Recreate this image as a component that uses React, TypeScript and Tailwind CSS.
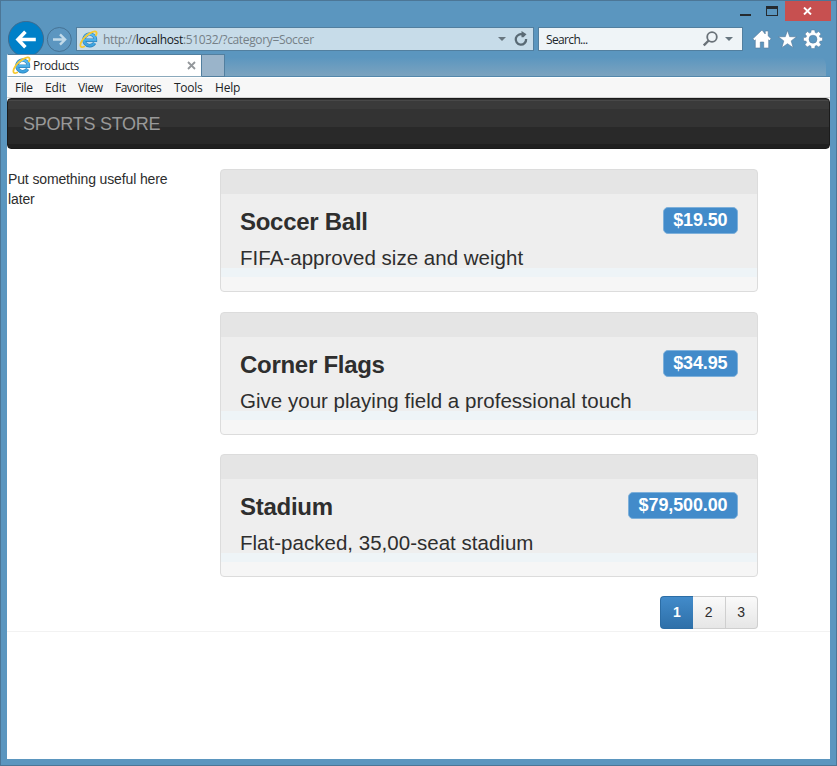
import type { ReactNode } from "react";

const UI_FONT = "font-['Open_Sans','Noto_Sans',sans-serif]";

function IeLogo() {
  return (
    <svg width="19" height="19" viewBox="0 0 19 19" className="block shrink-0">
      <defs>
        <linearGradient id="ie-blue" x1="0" y1="0" x2="0" y2="1">
          <stop offset="0" stopColor="#5dbdf0" />
          <stop offset="1" stopColor="#3ba3e0" />
        </linearGradient>
      </defs>
      <path d="M15.6 13a5.8 5.8 0 1 1 .9-2.8H6" fill="none" stroke="#2f83bb" strokeWidth="3.4" />
      <path d="M15.6 13a5.8 5.8 0 1 1 .9-2.8H6" fill="none" stroke="url(#ie-blue)" strokeWidth="2.3" />
      <path d="M6.5 7.2C7.5 5.6 9 4.7 11.2 4.7" fill="none" stroke="#b8eafa" strokeWidth="1" />
      <path d="M17 5.2C18.4 2.5 17.2.8 14.5 1.6 10 2.6 3.6 8.4 1.9 12.9c-1.3 3.6 0 5.1 3.3 3.6" fill="none" stroke="#f6c92f" strokeWidth="1.8" strokeLinecap="round" />
    </svg>
  );
}

function Caret() {
  return (
    <svg width="8" height="4" viewBox="0 0 8 4" className="block">
      <path d="M0 0h8L4 4z" fill="#697780" />
    </svg>
  );
}

function WindowControls() {
  return (
    <div className="flex h-5 shrink-0 justify-end pr-[5px]">
      <div className="flex w-[13px] items-end pb-[5px]">
        <div className="-ml-px h-0.5 w-[11px] bg-[#252b30]" />
      </div>
      <div className="ml-3 flex w-3 items-end pb-[5px]">
        <div className="h-[10px] w-3 border border-t-[3px] border-[#252b30]" />
      </div>
      <div className="ml-[7px] flex w-[46px] items-center justify-center bg-[#c75050]">
        <svg width="9" height="8" viewBox="0 0 9 8" className="mr-[2px]">
          <path d="M1 .5l7 7M8 .5l-7 7" stroke="#fff" strokeWidth="1.9" />
        </svg>
      </div>
    </div>
  );
}

function ToolbarIcons() {
  return (
    <div className="ml-[9px] flex h-5 items-center gap-[6px]">
      <svg width="20" height="20" viewBox="0 0 20 20">
        <path d="M10 1 .8 9.8l1.7 1.7.8-.7V19h5v-6h3.4v6h5v-8.2l.8.7 1.7-1.7-3-2.9V2h-3v3z" fill="#fff" stroke="#54799a" strokeWidth=".6" />
      </svg>
      <svg width="19" height="20" viewBox="0 0 19 20">
        <path d="m9.5 1.4 2.2 6.3 6.9.1-5.4 4.1 2 6.8-5.7-4-5.7 4 2-6.8L.4 7.8l6.9-.1z" fill="#fff" stroke="#54799a" strokeWidth=".6" />
      </svg>
      <svg width="20" height="20" viewBox="0 0 20 20">
        <g fill="#fff" stroke="#54799a" strokeWidth=".5">
          <path d="M8.3 1h3.4l.5 2.6 1.2.5 2.2-1.5L18 5l-1.6 2 .5 1.2 2.6.4v3.2l-2.6.5-.5 1.2L18 15.7 15.7 18l-2.3-1.5-1.2.5-.5 2.5H8.3L7.8 17l-1.2-.5L4.3 18 2 15.7l1.6-2.2-.5-1.2-2.6-.5V8.6l2.6-.4L3.6 7 2 5l2.4-2.4 2.2 1.5 1.2-.5z" />
          <circle cx="10" cy="10.2" r="4" fill="#5b96bf" />
        </g>
      </svg>
    </div>
  );
}

function AddressRow() {
  return (
    <div className="flex h-[33px] shrink-0 items-start overflow-hidden pl-[7px]">
      <svg width="68" height="37" viewBox="0 0 68 37" className="shrink-0">
        <circle cx="18" cy="18" r="17.6" fill="#0080c8" stroke="#42698a" strokeWidth=".9" />
        <path d="M27.8 18.5H11M17.4 10.8l-7.4 7.7 7.4 7.7" fill="none" stroke="#fff" strokeWidth="3.6" />
        <circle cx="51.3" cy="18.5" r="12" fill="#5c96c0" stroke="#467395" strokeWidth="1" />
        <path d="M45 18.5h12M52 13.4l5.1 5.1-5.1 5.1" fill="none" stroke="#c1dae9" strokeWidth="2.4" />
      </svg>
      <div className={`mt-1.5 flex h-6 w-[458px] shrink-0 items-center border border-[#527f9f] bg-[#c7dce9] pl-[2px] text-xs text-[#758087] ${UI_FONT}`}>
        <IeLogo />
        <span className="ml-[5px] pt-0.5 whitespace-pre tracking-[-0.35px]">
          http://<span className="text-[#15191c]">localhost</span>:51032/?category=Soccer
        </span>
        <div className="ml-auto mr-[5px] flex items-center gap-[8px]">
          <Caret />
          <svg width="14" height="16" viewBox="0 0 14 16">
            <path d="M9.1 3.7A5.2 5.2 0 1 0 12.1 8" fill="none" stroke="#596a75" strokeWidth="2.3" />
            <path d="M7.5 0v6.3h2l3-3.1z" fill="#596a75" />
          </svg>
        </div>
      </div>
      <div className={`ml-1 mt-1.5 flex h-6 w-[205px] shrink-0 items-center border border-[#527f9f] bg-[#eff4f7] pl-[7px] text-xs text-[#20252a] ${UI_FONT}`}>
        <span className="pt-0.5 tracking-[-0.65px]">Search...</span>
        <div className="ml-auto mr-[9px] flex items-center gap-[7px]">
          <svg width="15" height="16" viewBox="0 0 15 16">
            <circle cx="9" cy="6" r="4.8" fill="none" stroke="#697178" strokeWidth="1.8" />
            <path d="M5.7 9.5.8 14.5" stroke="#697178" strokeWidth="2.4" />
          </svg>
          <Caret />
        </div>
      </div>
      <div className="mt-2">
        <ToolbarIcons />
      </div>
    </div>
  );
}

function TabRow() {
  return (
    <div className="flex h-[23px] shrink-0 px-1.5">
      <div className={`flex w-[195px] items-center border-x border-t border-b border-t-[#527f9f] border-b-[#8ba9bc] border-l-[#e8f0f5] border-r-[#527f9f] bg-white pl-1 text-xs text-[#24282b] ${UI_FONT}`}>
        <IeLogo />
        <span className="ml-[2px] pt-px tracking-[-0.5px]">Products</span>
        <svg width="9" height="9" viewBox="0 0 9 9" className="ml-auto mr-[5px]">
          <path d="m1 1 7 7M8 1 1 8" stroke="#93979b" strokeWidth="1.8" />
        </svg>
      </div>
      <div className="w-[23px] border-y border-r border-[#527f9f] bg-[#9ab4ca]" />
      <div className="flex-1 border-b border-[#5488ac]">
        <div className="mr-1 h-full rounded-tr-xl bg-linear-to-b from-[#5b96bf] from-15% to-[#7ba3bf]" />
      </div>
    </div>
  );
}

function MenuBar() {
  return (
    <div className={`flex h-[21px] shrink-0 border-y border-t-white border-b-[#d4d4d4] bg-[#f7f7f7] pl-2 text-xs leading-[20px] text-[#202326] ${UI_FONT}`}>
      <span className="w-[30px] tracking-[-0.3px]">File</span>
      <span className="w-[33px] tracking-[-0.1px]">Edit</span>
      <span className="w-[37px] tracking-[-0.4px]">View</span>
      <span className="w-[59px] tracking-[-0.5px]">Favorites</span>
      <span className="w-[41px] tracking-[-0.3px]">Tools</span>
      <span className="tracking-[-0.2px]">Help</span>
    </div>
  );
}

type Product = { name: string; description: string; price: string };

const products: Product[] = [
  { name: "Soccer Ball", description: "FIFA-approved size and weight", price: "$19.50" },
  { name: "Corner Flags", description: "Give your playing field a professional touch", price: "$34.95" },
  { name: "Stadium", description: "Flat-packed, 35,00-seat stadium", price: "$79,500.00" },
];

function ProductCard({ name, description, price }: Product) {
  return (
    <div className="h-[123px] rounded-[4px] border border-[#dcdcdc] bg-[linear-gradient(#e5e5e5_0px,#e5e5e5_24px,#eeeeee_24px,#eeeeee_98px,#eef4f7_98px,#eef4f7_107px,#f6f6f6_107px)] px-[19px] text-[#2e2e2e]">
      <div className="flex h-[70px] items-start justify-between pt-9">
        <h2 className="text-[24px] leading-[31px] font-bold tracking-[-0.28px]">{name}</h2>
        <span className="mt-px h-[27px] rounded-[5px] border border-[#7eb0da] bg-[#428bca] px-[9.5px] text-[18px] leading-[24px] font-bold tracking-[-0.12px] text-white">
          {price}
        </span>
      </div>
      <p className="text-[20.5px] leading-[36px] tracking-[0.02px] whitespace-nowrap">{description}</p>
    </div>
  );
}

function PageButton({ children, active }: { children: ReactNode; active?: boolean }) {
  return (
    <div
      className={
        active
          ? "flex w-[33px] items-center justify-center rounded-l-[4px] border-y border-l border-[#2c6da5] bg-linear-to-b from-[#428bca] to-[#2e70a9] font-bold text-white"
          : "flex flex-1 items-center justify-center border-y border-r border-[#cfcfcf] bg-linear-to-b from-[#fafafa] to-[#e6e6e6] text-[#2d2d2d] last:rounded-r-[4px]"
      }
    >
      {children}
    </div>
  );
}

export default function App() {
  return (
    <div className="flex h-[766px] w-[837px] flex-col overflow-hidden border border-[#4c7696] bg-[#5b96bf] font-['Liberation_Sans',Arial,sans-serif]">
      <WindowControls />
      <AddressRow />
      <TabRow />
      <main className="mx-1.5 mb-1.5 flex flex-1 flex-col bg-white">
        <MenuBar />
        <header className="h-[51px] shrink-0 rounded-[4px] border border-[#1b1b1b] bg-[linear-gradient(#303030_0px,#303030_1px,#484848_1px,#484848_2px,#3a3a3a_2px,#3a3a3a_10px,#333333_10px,#333333_28px,#292929_28px,#292929_45px,#202020_45px)] pl-[15px] text-[18px] leading-[50px] tracking-[-0.25px] text-[#999999]">
          SPORTS STORE
        </header>
        <div className="flex h-[483px] shrink-0 border-b border-[#f2f2f2] pt-5">
          <aside className="w-[213px] pl-px pt-px text-[14px] leading-[19.5px] tracking-[-0.13px] text-[#2d2d2d]">
            <p className="w-[180px]">Put something useful here later</p>
          </aside>
          <section className="flex w-[538px] flex-col gap-[19.25px] pt-[0.45px]">
            {products.map((product) => (
              <ProductCard key={product.name} {...product} />
            ))}
            <div className="flex h-[33px] w-[98px] self-end text-[14px]">
              <PageButton active>1</PageButton>
              <PageButton>2</PageButton>
              <PageButton>3</PageButton>
            </div>
          </section>
        </div>
      </main>
    </div>
  );
}
